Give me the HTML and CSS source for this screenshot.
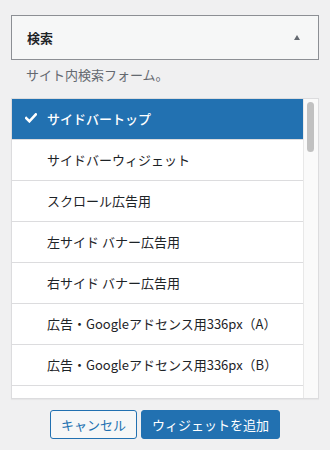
FILE: index.html
```html
<!DOCTYPE html>
<html lang="ja">
<head>
<meta charset="utf-8">
<link rel="stylesheet" href="styles.css">
</head>
<body>
<div class="panel">
  <div class="widget-top">
    <span class="widget-title">検索</span>
    <span class="arrow"></span>
  </div>
  <p class="desc">サイト内検索フォーム。</p>
  <div class="chooser">
    <ul class="areas">
      <li class="selected"><svg class="check" viewBox="0 0 12 10" width="12" height="10"><polyline points="1.2,5.2 4.4,8.3 10.8,1.4" fill="none" stroke="#fff" stroke-width="2.6" stroke-linecap="square"/></svg>サイドバートップ</li>
      <li>サイドバーウィジェット</li>
      <li>スクロール広告用</li>
      <li>左サイド バナー広告用</li>
      <li>右サイド バナー広告用</li>
      <li>広告・Googleアドセンス用336px（A）</li>
      <li>広告・Googleアドセンス用336px（B）</li>
      <li class="empty"></li>
    </ul>
    <div class="scrollbar"><div class="thumb"></div></div>
  </div>
  <div class="actions">
    <button class="btn btn-cancel">キャンセル</button>
    <button class="btn btn-primary">ウィジェットを追加</button>
  </div>
</div>
</body>
</html>
```

FILE: styles.css
```css
html, body {
  margin: 0;
  padding: 0;
  background: #f0f0f1;
}
body {
  font-family: "Noto Sans CJK JP", "Noto Sans", sans-serif;
  font-size: 13px;
  color: #1d2327;
}
.panel {
  padding: 15px 11px 0;
}
.widget-top {
  height: 43px;
  border: 1px solid #8c8f94;
  background: #f6f7f7;
  display: flex;
  align-items: center;
  justify-content: space-between;
  padding: 0 18px 0 15px;
}
.widget-title {
  font-weight: 700;
  font-size: 13px;
  color: #1d2327;
}
.arrow {
  width: 0;
  height: 0;
  border-left: 3.5px solid transparent;
  border-right: 3.5px solid transparent;
  border-bottom: 5px solid #646970;
}
.desc {
  margin: 6px 0 0;
  padding: 0 15px;
  line-height: 18px;
  color: #646970;
  font-size: 13px;
}
.chooser {
  margin-top: 14px;
  height: 299px;
  border: 1px solid #dcdcde;
  background: #fff;
  display: flex;
  box-shadow: 0 1px 1px rgba(0,0,0,0.04);
}
.areas {
  flex: 1;
  list-style: none;
  margin: 0;
  padding: 0;
  overflow: hidden;
}
.areas li {
  height: 40px;
  border-bottom: 1px solid #dcdcde;
  display: flex;
  align-items: center;
  padding-left: 35px;
  padding-bottom: 2px;
  box-sizing: border-box;
  height: 41px;
  position: relative;
  color: #1d2327;
  white-space: nowrap;
}
.areas li.selected {
  background: #2271b1;
  color: #fff;
  font-weight: 500;
}
.check {
  position: absolute;
  left: 13px;
  top: 14px;
}
.scrollbar {
  width: 15px;
  background: #fafafa;
  border-left: 1px solid #e8e8e8;
  box-sizing: border-box;
  flex: none;
}
.thumb {
  width: 7px;
  height: 50px;
  margin: 3px 0 0 3px;
  border-radius: 4px;
  background: #c1c1c1;
}
.actions {
  display: flex;
  justify-content: center;
  gap: 4px;
  margin-top: 11px;
}
.btn {
  height: 29px;
  font-family: "Noto Sans CJK JP", "Noto Sans", sans-serif;
  font-size: 13px;
  border-radius: 3px;
  padding: 0 10px 1px;
  border: 1px solid #2271b1;
  cursor: pointer;
}
.btn-cancel {
  background: #f6f7f7;
  color: #2271b1;
}
.btn-primary {
  background: #2271b1;
  color: #fff;
}
```
